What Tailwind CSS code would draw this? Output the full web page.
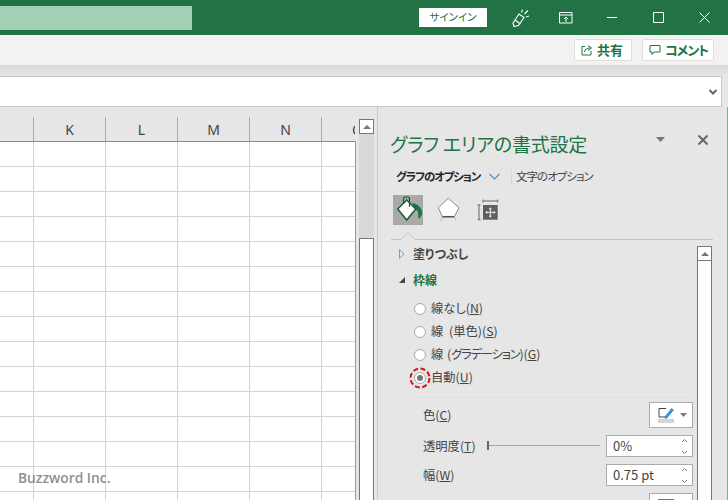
<!DOCTYPE html>
<html lang="ja">
<head>
    <meta charset="UTF-8">
    <title>グラフ エリアの書式設定</title>
    <script src="https://cdn.jsdelivr.net/npm/@tailwindcss/browser@4"></script>
</head>
<body class="w-[728px] h-[500px] overflow-hidden bg-[#e6e6e6] font-['Noto_Sans_CJK_JP','Noto_Sans',sans-serif] [font-feature-settings:'palt'] text-[#444] relative">

    <!-- title bar -->
    <div class="h-[35px] bg-[#217346] flex items-center">
        <div class="w-[192px] h-[24px] mt-[1px] bg-[#a3cfb4]"></div>
        <div class="ml-[227px] w-[68px] h-[19px] mt-[-1px] bg-white flex items-center justify-center text-[10.500px] text-[#217346]">サインイン</div>
        <svg class="ml-[25px]" width="18" height="18" viewBox="0 0 18 18" fill="none" stroke="white" stroke-width="1.100"><path d="M1 14 L7 5 L12 8.500 L6.500 16.500 L2 17.500 Z M3 11 L8.500 15 M12.500 5 L16 1.500 M9.500 3.500 L10.500 .5 M14 8 L17 7"/></svg>
        <svg class="ml-[29px]" width="14" height="12" viewBox="0 0 14 12" fill="none" stroke="white" stroke-width="1"><path d="M.5 .5 H13 V11 H.5 Z M.5 3 H13 M7 10 V5 M5 7 L7 5 L9 7"/></svg>
        <svg class="ml-[34px]" width="11" height="12" viewBox="0 0 11 12" fill="none" stroke="white" stroke-width="1"><path d="M0 5.500 H10"/></svg>
        <svg class="ml-[35px]" width="11" height="11" viewBox="0 0 11 11" fill="none" stroke="white" stroke-width="1"><path d="M.5 .5 H10.500 V10.500 H.5 Z"/></svg>
        <svg class="ml-[35px]" width="11" height="11" viewBox="0 0 11 11" fill="none" stroke="white" stroke-width="1"><path d="M.5 .5 L10.500 10.500 M10.500 .5 L.5 10.500"/></svg>
    </div>

    <!-- ribbon -->
    <div class="h-[30px] bg-[#f3f2f1] flex items-center">
        <div class="ml-[574px] w-[58px] h-[22px] bg-white border border-[#e1dfdd] rounded-[2px] flex items-center text-[13px] font-bold text-[#217346]">
            <svg class="ml-[6px]" width="12" height="12" viewBox="0 0 12 12" fill="none" stroke="#217346" stroke-width="1"><path d="M4 2.500 H1 V11 H10 V7 M3.500 8 C4 5 6 4 9 4 M7 1.500 L10.500 4 L7 6.500"/></svg>
            <span class="ml-[4px]">共有</span>
        </div>
        <div class="ml-[10px] w-[72px] h-[22px] bg-white border border-[#e1dfdd] rounded-[2px] flex items-center text-[13px] font-bold text-[#217346]">
            <svg class="ml-[6px]" width="12" height="12" viewBox="0 0 12 12" fill="none" stroke="#217346" stroke-width="1"><path d="M1 1.500 H11 V8 H5 L3 10.500 V8 H1 Z"/></svg>
            <span class="ml-[4px] tracking-[-1px]">コメント</span>
        </div>
    </div>
    <div class="h-[11px] bg-linear-to-b from-[#d8d8d8] to-[#e6e6e6]"></div>

    <!-- formula bar -->
    <div class="w-[722px] h-[31px] bg-white border border-l-0 border-[#c6c6c6] flex items-center justify-end pr-[3px]">
        <svg width="10" height="8" viewBox="0 0 10 8" fill="none" stroke="#666" stroke-width="2"><path d="M1.500 2 L5 5.500 L8.500 2"/></svg>
    </div>

    <div class="flex h-[393px]">
        <!-- sheet -->
        <div class="w-[359px] pt-[10px] shrink-0">
            <div class="flex h-[24px] overflow-hidden w-[355px] text-[14px] font-['Noto_Sans'] leading-[26px] text-center">
                <div class="w-[33px] shrink-0"></div>
                <div class="w-[72px] shrink-0 border-l border-[#ababab]">K</div>
                <div class="w-[72px] shrink-0 border-l border-[#ababab]">L</div>
                <div class="w-[72px] shrink-0 border-l border-[#ababab]">M</div>
                <div class="w-[72px] shrink-0 border-l border-[#ababab]">N</div>
                <div class="w-[72px] shrink-0 border-l border-[#ababab]">O</div>
            </div>
            <div id="grid" class="w-[356px] h-[359px] bg-white border-t border-r border-t-[#8a8a8a] border-r-[#9a9a9a] overflow-hidden"></div>
        </div>

        <!-- sheet scrollbar -->
        <div class="w-[15px] shrink-0 pt-[12px] flex flex-col">
            <div class="h-[15px] bg-white border border-[#777] flex items-center justify-center">
                <div class="w-0 h-0 border-x-[4px] border-x-transparent border-b-[4px] border-b-[#777]"></div>
            </div>
            <div class="h-[104px] bg-[#d9d9d9]"></div>
            <div class="flex-1 bg-white border border-b-0 border-[#777]"></div>
        </div>

        <!-- format pane -->
        <div class="ml-[3px] flex-1 border-l border-r border-l-[#c8c8c8] border-r-[#7fae93] flex flex-col">
            <div class="mt-[25px] h-[24px] flex items-center">
                <div class="ml-[12px] w-[261px] text-[19px] tracking-[-0.2px] leading-[24px] text-[#217346]">グラフ エリアの書式設定</div>
                <svg class="ml-[5px] mt-[-8px]" width="10" height="6" viewBox="0 0 10 6"><path d="M0 0 H9 L4.500 5 Z" fill="#777"/></svg>
                <svg class="ml-[31px] mt-[-8px]" width="12" height="12" viewBox="0 0 12 12" fill="none" stroke="#666" stroke-width="2"><path d="M1.500 1.500 L10.500 10.500 M10.500 1.500 L1.500 10.500"/></svg>
            </div>
            <div class="mt-[11px] h-[19px] flex items-center text-[11.500px] tracking-[-1.200px] leading-[19px]">
                <div class="ml-[18px] font-bold text-[#262626] w-[85px] whitespace-nowrap">グラフのオプション</div>
                <svg class="ml-[8px]" width="11" height="7" viewBox="0 0 11 7" fill="none" stroke="#4a90d0" stroke-width="1.200"><path d="M.5 1 L5.500 6 L10.500 1"/></svg>
                <div class="ml-[11px] w-px h-[15px] bg-[#d8d8d8]"></div>
                <div class="ml-[4px] tracking-[-1px] whitespace-nowrap">文字のオプション</div>
            </div>

            <div class="mt-[9px] h-[30px] flex items-center">
                <div class="ml-[15px] w-[30px] h-[30px] bg-[#a9a9a9]">
                    <svg width="30" height="30" viewBox="0 0 30 30">
                        <path d="M19 8 C25 9 30 13 29 19 C28 22 27 23 25.500 24 L25 17 L21 12 Z" fill="#217346"/>
                        <path d="M13.700 5 L22.700 14 L13.700 25 L4.700 14 Z" fill="white" stroke="#1b5e39" stroke-width="1.500"/>
                        <path d="M10.500 9 V4 C10.500 1 16.500 1 16.500 4 V12" fill="none" stroke="#1b5e39" stroke-width="1.200"/>
                    </svg>
                </div>
                <svg class="ml-[14px]" width="24" height="30" viewBox="0 0 24 30" fill="none">
                    <path d="M11.300 3.300 L22 12.700 L17.300 21.700 H5.300 L1.300 12.700 Z" fill="white" stroke="#8a8a8a"/>
                    <path d="M5 21.700 H17.500" stroke="#555" stroke-width="1.500"/>
                    <path d="M5.300 21.700 L4 26 M17.300 21.700 L19.300 26" stroke="#bbb"/>
                </svg>
                <svg class="ml-[16px]" width="22" height="22" viewBox="0 0 22 22" fill="none">
                    <path d="M6 2 H20.700 M6 .5 V3.500 M20.700 .5 V3.500 M2 6 V20.700 M.5 6 H3.500 M.5 20.700 H3.500" stroke="#666"/>
                    <rect x="6" y="6" width="14.700" height="14.700" fill="#5f5f5f"/>
                    <path d="M13.300 9 V18 M9 13.300 H18 M12 10.200 L13.300 9 L14.600 10.200 M12 16.800 L13.300 18 L14.600 16.800 M10.200 12 L9 13.300 L10.200 14.600 M16.800 12 L18 13.300 L16.800 14.600" stroke="white" stroke-width=".9"/>
                </svg>
            </div>
            <svg class="ml-[13px] mt-[7px]" width="322" height="8" viewBox="0 0 322 8" fill="none"><path d="M0 7.500 H10 L17 .5 L24 7.500 H322" stroke="#c4c4c4"/></svg>

            <div class="flex flex-1 overflow-hidden">
                <div class="w-[319px] shrink-0 pr-[4px] text-[12.300px]">
                    <div class="mt-[5px] h-[18px] flex items-center font-bold text-[12px]">
                        <svg class="ml-[21px]" width="6" height="10" viewBox="0 0 6 10" fill="none" stroke="#999"><path d="M.5 .5 L5 5 L.5 9.500 Z"/></svg>
                        <span class="ml-[8px]">塗りつぶし</span>
                    </div>
                    <div class="mt-[8px] h-[18px] flex items-center font-bold text-[12px] text-[#217346]">
                        <svg class="ml-[21px]" width="6" height="6" viewBox="0 0 6 6"><path d="M6 0 V6 H0 Z" fill="#444"/></svg>
                        <span class="ml-[8px]">枠線</span>
                    </div>

                    <div class="mt-[8px] h-[23px] flex items-center">
                        <div class="ml-[36px] w-[12px] h-[12px] rounded-full bg-white border border-[#aaa]"></div>
                        <span class="ml-[5px]">線なし(<u>N</u>)</span>
                    </div>
                    <div class="h-[23px] flex items-center">
                        <div class="ml-[36px] w-[12px] h-[12px] rounded-full bg-white border border-[#aaa]"></div>
                        <span class="ml-[5px] [word-spacing:3px]">線 (単色)(<u>S</u>)</span>
                    </div>
                    <div class="h-[23px] flex items-center">
                        <div class="ml-[36px] w-[12px] h-[12px] rounded-full bg-white border border-[#aaa]"></div>
                        <span class="ml-[5px] whitespace-nowrap [word-spacing:1px]">線 (<span class="tracking-[-1.200px]">グラデーション</span>)(<u>G</u>)</span>
                    </div>
                    <div class="h-[23px] flex items-center relative">
                        <div class="ml-[36px] w-[12px] h-[12px] rounded-full bg-white border border-[#aaa] flex items-center justify-center">
                            <div class="w-[6px] h-[6px] rounded-full bg-[#777]"></div>
                        </div>
                        <span class="ml-[5px]">自動(<u>U</u>)</span>
                        <svg class="absolute left-[31px] top-[0.5px]" width="22" height="22" viewBox="0 0 22 22" fill="none"><circle cx="11" cy="11" r="9.500" stroke="#d3141f" stroke-width="2" stroke-dasharray="5 2.500"/></svg>
                    </div>

                    <div class="ml-[38px] mt-[5px] h-px bg-[#ececec]"></div>

                    <div class="mt-[7px] h-[26px] flex items-center">
                        <span class="ml-[45px]">色(<u>C</u>)</span>
                        <div class="ml-auto w-[44px] h-[26px] border border-[#ababab] bg-white">
                            <svg width="42" height="24" viewBox="0 0 42 24" fill="none">
                                <path d="M16.500 14 H9 V5.500 H16" stroke="#444"/>
                                <path d="M14.500 14.500 L21.500 5.500 L23.500 7 L16.500 15.500 Z" fill="#3b94d9" stroke="#2a78b8" stroke-width=".6"/>
                                <rect x="8" y="16" width="16" height="4" fill="#d4d4d4"/>
                                <path d="M30 10 H37 L33.500 14 Z" fill="#777"/>
                            </svg>
                        </div>
                    </div>

                    <div class="mt-[7px] h-[22px] flex items-center">
                        <span class="ml-[45px] w-[64px] whitespace-nowrap">透明度(<u>T</u>)</span>
                        <div class="w-[113px] h-px mb-[2px] bg-[#a8a8a8] relative">
                            <div class="absolute left-0 top-[-4px] w-[2px] h-[9px] bg-[#666]"></div>
                        </div>
                        <div class="ml-[6px] w-[87px] h-[22px] bg-white border border-[#ababab] flex items-center pl-[6px] text-[13px]">
                            0%
                            <svg class="ml-auto mr-[4px]" width="7" height="17" viewBox="0 0 7 17" fill="none" stroke="#777"><path d="M1 4 L3.500 1.500 L6 4 M1 13 L3.500 15.500 L6 13"/></svg>
                        </div>
                    </div>

                    <div class="mt-[7px] h-[22px] flex items-center">
                        <span class="ml-[45px] w-[64px]">幅(<u>W</u>)</span>
                        <div class="ml-[119px] w-[87px] h-[22px] bg-white border border-[#ababab] flex items-center pl-[6px] text-[13px]">
                            0.75 pt
                            <svg class="ml-auto mr-[4px]" width="7" height="17" viewBox="0 0 7 17" fill="none" stroke="#777"><path d="M1 4 L3.500 1.500 L6 4 M1 13 L3.500 15.500 L6 13"/></svg>
                        </div>
                    </div>

                    <div class="mt-[7px] ml-auto w-[44px] h-[20px] border border-[#ababab] bg-white">
                        <div class="ml-[8px] mt-[5px] w-[16px] h-[2px] bg-[#2e86c9]"></div>
                    </div>
                </div>

                <!-- pane scrollbar -->
                <div class="w-[15px] shrink-0 mt-[6px] flex flex-col">
                    <div class="h-[15px] bg-white border border-[#777] flex items-center justify-center">
                        <div class="w-0 h-0 border-x-[4px] border-x-transparent border-b-[4px] border-b-[#777]"></div>
                    </div>
                    <div class="flex-1 bg-white border-x border-[#777]"></div>
                </div>
            </div>
        </div>
    </div>

    <div class="absolute left-[18px] top-[468px] text-[13.800px] leading-[20px] font-semibold font-['Open_Sans'] text-[#808080]/90">Buzzword Inc.</div>

    <script>
        const row = '<div class="flex h-[25px]">'
            + '<div class="w-[34px] border-r border-b border-[#d4d4d4]"></div>'
            + '<div class="w-[72px] border-r border-b border-[#d4d4d4]"></div>'.repeat(4)
            + '<div class="flex-1 border-b border-[#d4d4d4]"></div>'
            + '</div>';
        document.getElementById("grid").innerHTML = row.repeat(15);
    </script>
</body>
</html>
